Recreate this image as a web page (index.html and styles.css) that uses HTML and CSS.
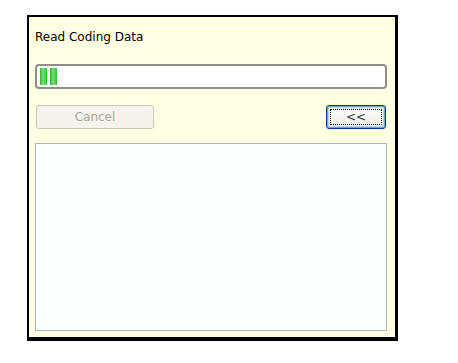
FILE: index.html
```html
<!DOCTYPE html>
<html>
  <head>
    <title>Read Coding Data</title>
    <meta charset="utf-8" />
    <link rel="stylesheet" href="styles.css">
  </head>
  <body>
    <div class="dialog">
      <div class="title">Read Coding Data</div>
      <div class="progress">
        <span class="chunk"></span>
        <span class="chunk"></span>
      </div>
      <div class="buttons">
        <button class="btn btn-cancel" disabled>Cancel</button>
        <button class="btn btn-toggle"><span class="focus">&lt;&lt;</span></button>
      </div>
      <div class="list"></div>
    </div>
  </body>
</html>
```

FILE: styles.css
```css
body {
  margin: 0;
  padding: 15px 0 0 27px;
  background: #fff;
  font-family: "DejaVu Sans", Verdana, sans-serif;
  font-size: 12px;
  color: #000;
}
.dialog {
  width: 352px;
  padding: 0 8px 6px 6px;
  background: #ffffe3;
  border-top: 2px solid #000;
  border-left: 2px solid #000;
  border-right: 3px solid #000;
  border-bottom: 4px solid #000;
}
.title {
  padding-top: 12px;
  line-height: 16px;
  margin-bottom: 19px;
}
.progress {
  height: 21px;
  border: 2px solid #8f8f88;
  border-radius: 4px;
  background: #fff;
  display: flex;
  gap: 3px;
  padding-left: 3px;
  align-items: center;
  margin-bottom: 16px;
}
.chunk {
  width: 7px;
  height: 17px;
  background: linear-gradient(to right, #2cb82c, #6ee46e 45%, #2cc52c);
}
.buttons {
  display: flex;
  justify-content: space-between;
  padding: 0 1px;
  margin-bottom: 14px;
}
.btn {
  height: 24px;
  font-family: inherit;
  font-size: 12px;
  border-radius: 3px;
  padding: 0;
}
.btn-cancel {
  width: 118px;
  background: #f4f3ee;
  border: 1px solid #cac8bb;
  color: #aca899;
}
.btn-toggle {
  width: 60px;
  padding: 3px;
  background: linear-gradient(#ffffff, #ecebe6);
  border: 1px solid #003c74;
  box-shadow: inset 0 0 0 1px #7da2ce, inset 0 0 0 2px #bcd4f6;
  color: #333;
}
.focus {
  display: block;
  height: 100%;
  box-sizing: border-box;
  border: 1px dotted #000;
  line-height: 14px;
}
.list {
  height: 186px;
  border: 1px solid #a7b6b6;
  background: #fdfefe;
}
```
